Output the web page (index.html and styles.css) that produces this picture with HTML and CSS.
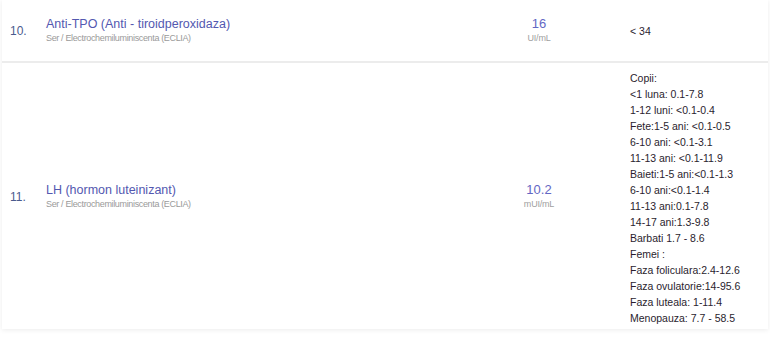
FILE: index.html
```html
<!DOCTYPE html>
<html>
<head>
<meta charset="utf-8">
<link rel="stylesheet" href="styles.css">
</head>
<body>
<div class="card">
  <div class="row row-first">
    <div class="num">10.</div>
    <div class="test">
      <div class="name">Anti-TPO (Anti - tiroidperoxidaza)</div>
      <div class="method">Ser / Electrochemiluminiscenta (ECLIA)</div>
    </div>
    <div class="result">
      <div class="value">16</div>
      <div class="unit">UI/mL</div>
    </div>
    <div class="ref">&lt; 34</div>
  </div>
  <div class="row">
    <div class="num">11.</div>
    <div class="test">
      <div class="name">LH (hormon luteinizant)</div>
      <div class="method">Ser / Electrochemiluminiscenta (ECLIA)</div>
    </div>
    <div class="result">
      <div class="value">10.2</div>
      <div class="unit">mUI/mL</div>
    </div>
    <div class="ref ref-list">
      <div>Copii:</div>
      <div>&lt;1 luna: 0.1-7.8</div>
      <div>1-12 luni: &lt;0.1-0.4</div>
      <div>Fete:1-5 ani: &lt;0.1-0.5</div>
      <div>6-10 ani: &lt;0.1-3.1</div>
      <div>11-13 ani: &lt;0.1-11.9</div>
      <div>Baieti:1-5 ani:&lt;0.1-1.3</div>
      <div>6-10 ani:&lt;0.1-1.4</div>
      <div>11-13 ani:0.1-7.8</div>
      <div>14-17 ani:1.3-9.8</div>
      <div>Barbati 1.7 - 8.6</div>
      <div>Femei :</div>
      <div>Faza foliculara:2.4-12.6</div>
      <div>Faza ovulatorie:14-95.6</div>
      <div>Faza luteala: 1-11.4</div>
      <div>Menopauza: 7.7 - 58.5</div>
    </div>
  </div>
</div>
</body>
</html>
```
FILE: styles.css
```css
html, body {
  margin: 0;
  padding: 0;
  background: #ffffff;
}
body {
  font-family: "Liberation Sans", Arial, sans-serif;
  width: 770px;
  height: 349px;
  overflow: hidden;
}
.card {
  background: #ffffff;
  margin: 0 2px;
  box-shadow: 0 1px 5px rgba(0, 0, 0, 0.08);
}
.row {
  display: grid;
  grid-template-columns: 44px 434px 118px 1fr;
  align-items: center;
}
.row-first {
  height: 61px;
  border-bottom: 2px solid #ececec;
}
.num {
  padding-left: 8px;
  padding-top: 1px;
  font-size: 12px;
  color: #4a5a8e;
}
.name {
  font-size: 12.5px;
  color: #5358b0;
  line-height: 16px;
}
.method {
  font-size: 9px;
  color: #9a9a9a;
  line-height: 13px;
  letter-spacing: -0.35px;
}
.result {
  text-align: center;
}
.value {
  font-size: 13px;
  color: #6367c4;
  line-height: 16px;
}
.unit {
  font-size: 9px;
  color: #a0a0a0;
  line-height: 13px;
  letter-spacing: -0.2px;
}
.ref {
  padding-left: 32px;
  font-size: 10.5px;
  color: #2a1d2e;
}
.ref-list {
  padding-top: 7px;
  padding-bottom: 3px;
  line-height: 16px;
}
```
